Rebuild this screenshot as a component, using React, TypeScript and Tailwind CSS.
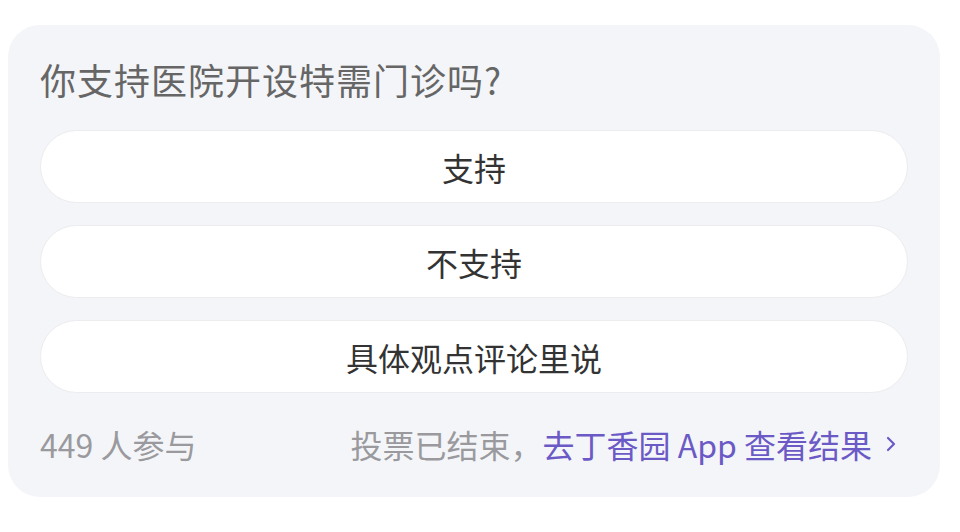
import React from "react";

const font = { fontFamily: '"Noto Sans CJK SC", "Noto Sans", sans-serif' };

function Option({ label }: { label: string }) {
  return (
    <div className="h-[73px] rounded-full bg-white border border-[#ececef] flex items-center justify-center text-[32px] text-[#333333]">
      {label}
    </div>
  );
}

export default function App() {
  return (
    <div className="w-[960px] h-[532px] bg-white pt-[25px] pl-[8px]" style={font}>
      <div className="w-[932px] h-[472px] bg-[#f4f5f8] rounded-[32px] px-[32px] pt-[30px] flex flex-col">
        <div className="h-[48px] flex items-center text-[36px] leading-none tracking-[1px] text-[#666666]">
          你支持医院开设特需门诊吗?
        </div>
        <div className="flex flex-col gap-[22px] mt-[27px] w-[868px]">
          <Option label="支持" />
          <Option label="不支持" />
          <Option label="具体观点评论里说" />
        </div>
        <div className="mt-[31px] h-[40px] w-[868px] flex items-center justify-between text-[32px] leading-none">
          <span className="text-[#9a9a9e]">449 人参与</span>
          <span className="flex items-center pr-[10px]">
            <span className="text-[#9a9a9e]">投票已结束，</span>
            <span className="text-[#6b5ac6]">去丁香园 App 查看结果</span>
            <svg width="14" height="20" viewBox="0 0 14 20" className="ml-[12px]" fill="none">
              <path d="M4 4 L10 10 L4 16" stroke="#6b5ac6" strokeWidth="2.2" strokeLinecap="round" strokeLinejoin="round" />
            </svg>
          </span>
        </div>
      </div>
    </div>
  );
}
